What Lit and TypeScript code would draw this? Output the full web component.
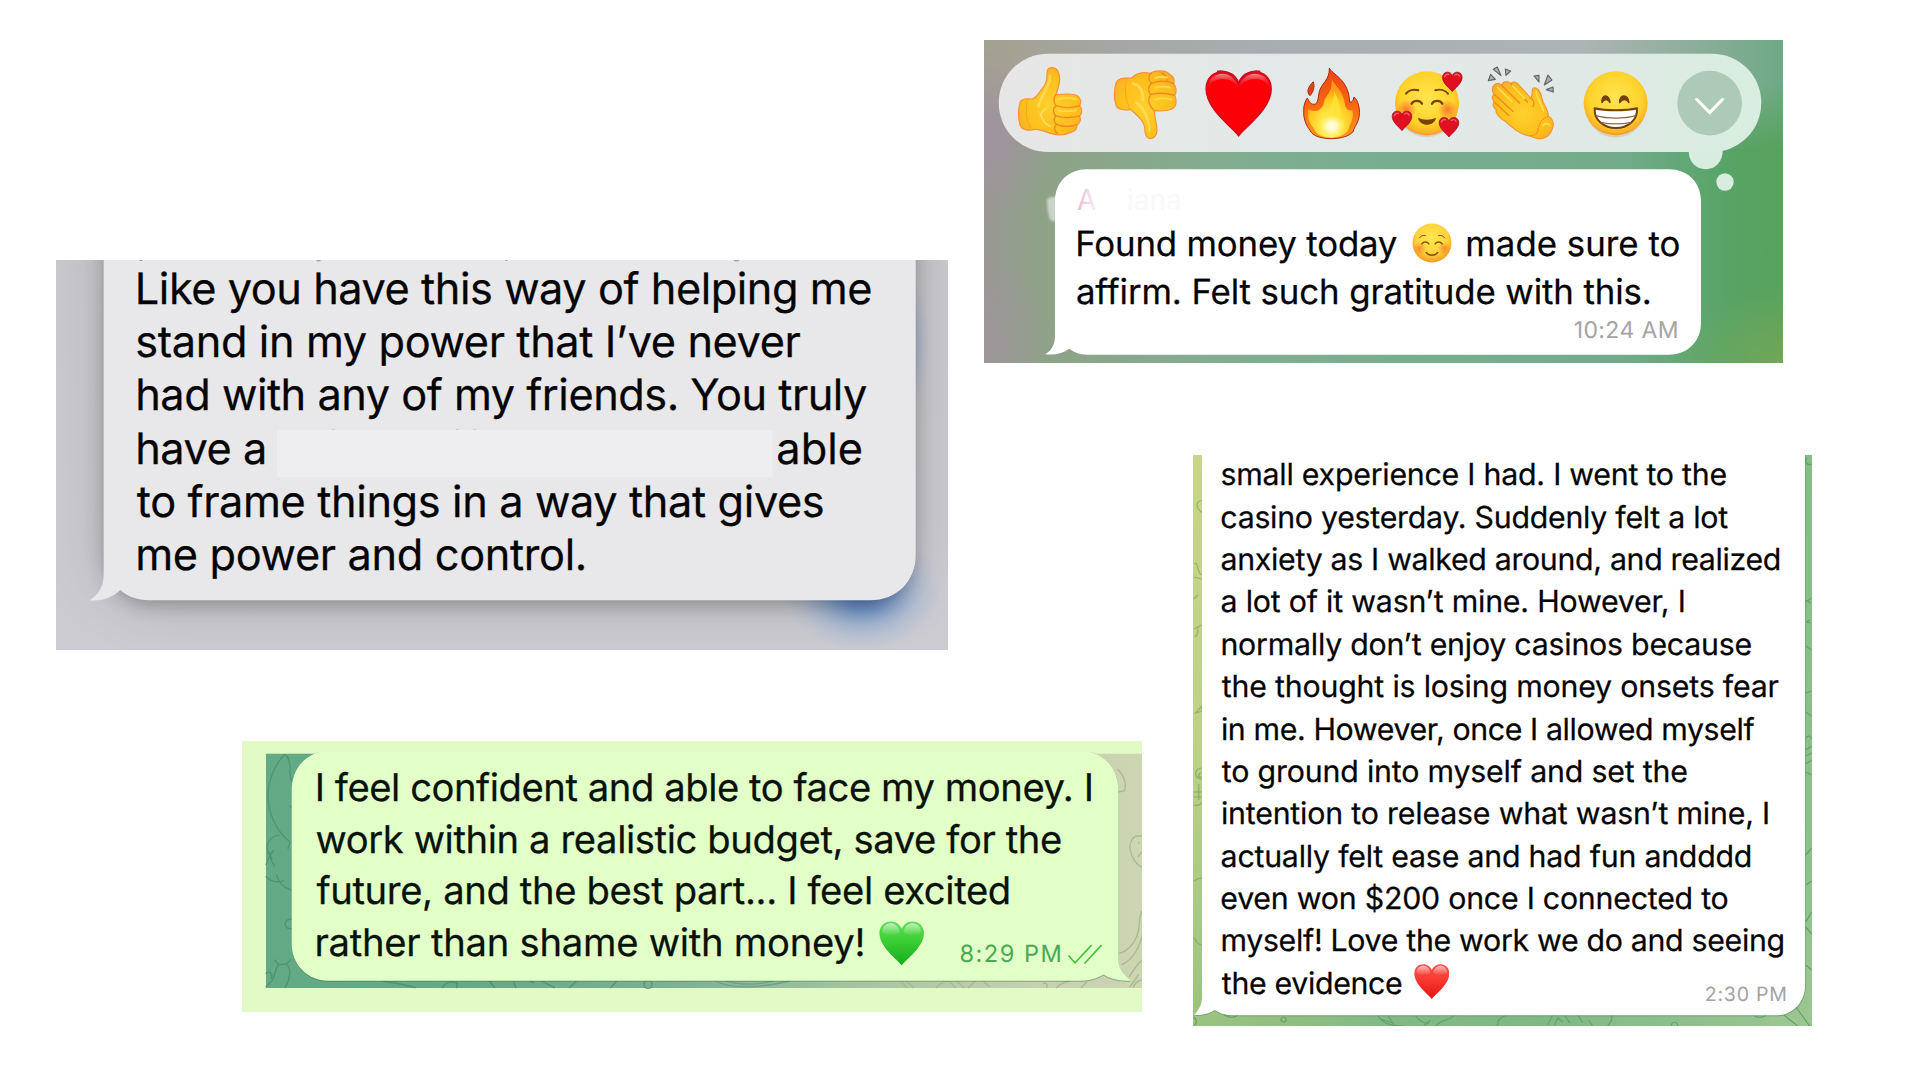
import { LitElement, html, svg, css } from 'lit';
import { customElement, property } from 'lit/decorators.js';
import { styleMap } from 'lit/directives/style-map.js';

const FAMILY = 'Inter, "Liberation Sans", sans-serif';
// half of (ascent - descent) of Inter, in em
const BASELINE_EM = 0.3636;

interface Run {
  text?: string;
  icon?: unknown;
  from: number;
  to: number;
  drop?: number;
  size?: number;
  color?: string;
}

const ctx = document.createElement('canvas').getContext('2d')!;

function inkOf(text: string, size: number) {
  ctx.font = `200px ${FAMILY}`;
  const m = ctx.measureText(text);
  const k = size / 200;
  return {
    left: -m.actualBoundingBoxLeft * k,
    right: m.actualBoundingBoxRight * k,
    width: m.width * k,
  };
}

@customElement('message-text')
export class MessageText extends LitElement {
  @property({ attribute: false }) lines: Run[][] = [];
  @property({ type: Number }) left = 0;
  @property({ type: Number }) size = 30;
  @property({ type: Number }) leading = 40;

  static styles = css`
    :host {
      display: block;
      font-family: Inter, "Liberation Sans", sans-serif;
      text-rendering: geometricPrecision;
      color: var(--message-color, #050505);
    }

    .line {
      display: flex;
      align-items: flex-start;
    }

    .run {
      flex: none;
      white-space: pre;
      -webkit-text-stroke: 0.25px currentColor;
    }

    .small {
      -webkit-text-stroke: 0;
    }

    .icon {
      flex: none;
      line-height: 0;
    }
  `;

  renderLine(runs: Run[]) {
    let cursor = this.left;
    return runs.map((run) => {
      if (run.icon) {
        const style = {
          marginLeft: `${run.from - cursor}px`,
          marginTop: `${run.drop ?? 0}px`,
          width: `${run.to - run.from}px`,
        };
        cursor = run.to;
        return html`<span class="icon" style=${styleMap(style)}>${run.icon}</span>`;
      }
      const text = run.text!;
      const size = run.size ?? this.size;
      const ink = inkOf(text, size);
      const spacing = text.length > 1
        ? (run.to - run.from - (ink.right - ink.left)) / (text.length - 1)
        : 0;
      const start = run.from - ink.left;
      const style = {
        marginLeft: `${start - cursor}px`,
        marginTop: `${(run.drop ?? 0) + BASELINE_EM * (this.size - size)}px`,
        fontSize: `${size}px`,
        letterSpacing: `${spacing}px`,
        color: run.color ?? 'inherit',
      };
      cursor = start + ink.width + spacing * text.length;
      return html`<span class="run ${run.size ? 'small' : ''}" style=${styleMap(style)}>${text}</span>`;
    });
  }

  render() {
    const height = { height: `${this.leading}px`, lineHeight: `${this.leading}px` };
    return this.lines.map(
      (runs) => html`<div class="line" style=${styleMap(height)}>${this.renderLine(runs)}</div>`
    );
  }
}

const HEART = 'M50 98C42 86 1 58 1 27C1 10 13 1 26 1C38 1 46 8 50 17C54 8 62 1 74 1C87 1 99 10 99 27C99 58 58 86 50 98Z';

const heart = (id: string, top: string, mid: string, end: string) => html`
  <svg width="100%" viewBox="0 0 100 99">
    <defs>
      <linearGradient id=${id} x1="0" y1="0" x2="0" y2="1">
        <stop offset="0" stop-color=${top} />
        <stop offset=".4" stop-color=${mid} />
        <stop offset="1" stop-color=${end} />
      </linearGradient>
      <linearGradient id="${id}-shine" x1="0" y1="0" x2="0" y2="1">
        <stop offset="0" stop-color="#fff" stop-opacity=".6" />
        <stop offset="1" stop-color="#fff" stop-opacity="0" />
      </linearGradient>
    </defs>
    <path d=${HEART} fill="url(#${id})" />
    <path d="M7 24C8 10 18 5 27 5C38 6 44 14 46 24C36 34 15 34 7 24ZM54 24C56 14 62 6 73 5C82 5 92 10 93 24C85 34 64 34 54 24Z" fill="url(#${id}-shine)" />
  </svg>`;

const smile = html`
  <svg width="100%" viewBox="96 578 121 121">
    <defs>
      <radialGradient id="sm" cx=".5" cy=".38" r=".62">
        <stop offset="0" stop-color="#ffe94f" />
        <stop offset=".65" stop-color="#fdd33c" />
        <stop offset="1" stop-color="#f29a1f" />
      </radialGradient>
      <radialGradient id="smc"><stop offset="0" stop-color="#f5692c" stop-opacity=".65" /><stop offset="1" stop-color="#f5692c" stop-opacity="0" /></radialGradient>
    </defs>
    <circle cx="156.5" cy="638.5" r="59" fill="url(#sm)" />
    <circle cx="119" cy="655" r="20" fill="url(#smc)" />
    <circle cx="194" cy="655" r="20" fill="url(#smc)" />
    <g fill="none" stroke="#8a4b12" stroke-width="4.5" stroke-linecap="round">
      <path d="M126 641C131 634 142 634 147 641M166 641C171 634 182 634 187 641M139 667C146 678 167 678 174 667" />
      <path d="M118 623C123 616 130 614 137 616M176 616C183 614 190 616 195 623" stroke-width="3" />
    </g>
  </svg>`;

const checks = html`
  <svg width="100%" viewBox="1134 640 102 62">
    <path d="M1137 676L1155 697L1203 645M1185 697L1233 645" fill="none" stroke="#45c43d" stroke-width="5" stroke-linejoin="round" stroke-linecap="round" />
  </svg>`;

// one cell of the reaction bar; all of them share the same vertical range
const cell = (x: number, art: unknown) => html`<svg class="reaction" viewBox="${x} 71 283 295">${art}</svg>`;

const smallHeart = (x: number, y: number) => svg`
  <path transform="translate(${x} ${y}) scale(.6)" d=${HEART} fill="#e00f22" stroke="#a80d20" stroke-width="4" />
  <path transform="translate(${x} ${y}) scale(.6)" d="M12 24C14 12 24 10 32 12M62 15C70 10 80 12 86 20" fill="none" stroke="#f7606a" stroke-width="7" stroke-linecap="round" />`;

const reactions = [
  cell(99, svg`
    <defs>
      <radialGradient id="hand" cx=".5" cy=".55" r=".6"><stop offset="0" stop-color="#ffd02e" /><stop offset=".7" stop-color="#fdbf1b" /><stop offset="1" stop-color="#fbaf28" /></radialGradient>
    </defs>
    <path d="M247 112C260 112 268 124 269 146C269 165 262 180 258 193C285 190 310 190 322 196C335 203 334 218 329 227C338 235 336 251 329 257C334 268 329 280 321 284C322 298 312 304 300 307C285 315 262 315 245 310C230 306 208 294 190 298C175 302 155 299 150 284C144 262 145 235 150 216C155 204 170 205 185 206C200 203 206 189 215 177C229 162 232 142 231 128C231 117 237 112 247 112Z" fill="url(#hand)" stroke="#f79331" stroke-width="3.5" />
    <g fill="none" stroke="#f08a1e" stroke-width="4" stroke-linecap="round">
      <path d="M258 193C250 201 250 216 258 226C247 236 249 249 257 257C249 268 252 276 259 282C251 292 254 302 262 309" />
      <path d="M258 226C280 233 308 233 329 226M257 257C280 264 308 263 329 257M259 282C280 290 303 290 321 283" />
      <path d="M173 207C165 234 167 268 181 292" stroke="#fba421" stroke-width="3" />
      <path d="M240 138C241 168 215 190 205 228" stroke="#ffe270" stroke-width="8" opacity=".6" />
      <path d="M264 207C280 202 304 202 318 207M266 240C280 243 304 243 318 240" stroke="#ffdb51" stroke-width="5" />
      <path d="M213 255C217 271 229 283 241 288M228 234C218 244 213 247 211 254" stroke="#ffe270" stroke-width="5" opacity=".8" />
    </g>`),
  cell(382, svg`
    <path d="M541 325C528 323 525 306 525 290C520 265 495 250 483 237C465 240 445 240 439 225C432 205 433 175 440 155C450 138 470 145 485 143C500 130 520 124 541 129C560 118 590 120 600 132C612 138 616 150 612 160C621 172 621 185 615 195C623 210 621 231 605 237C590 242 570 243 555 241C553 262 562 280 562 298C562 315 553 326 541 325Z" fill="url(#hand)" stroke="#f79331" stroke-width="3.5" />
    <g fill="none" stroke="#f08a1e" stroke-width="4" stroke-linecap="round">
      <path d="M546 128C534 137 536 151 545 159C534 170 535 184 543 193C533 207 536 224 553 240" />
      <path d="M545 159C563 151 592 150 612 160M543 193C564 187 590 188 615 195M575 128C585 130 592 140 592 150" />
      <path d="M471 145C464 172 466 210 482 237" stroke="#fba421" stroke-width="3" />
      <path d="M490 160C508 164 521 179 520 209M500 218C519 230 534 250 540 300" stroke="#ffe270" stroke-width="8" opacity=".6" />
      <path d="M558 172C573 168 590 168 602 172M556 208C570 204 592 204 605 208M557 143C568 139 582 139 592 142" stroke="#ffdb51" stroke-width="5" />
    </g>`),
  cell(665, svg`
    <defs><linearGradient id="rim" x1="0" y1="0" x2="0" y2="1"><stop offset="0" stop-color="#ef8b90" /><stop offset="1" stop-color="#f00" stop-opacity="0" /></linearGradient></defs>
    <path transform="translate(705 122) scale(2 1.99)" d=${HEART} fill="#fb0007" stroke="#cc0824" stroke-width="1.8" />
    <path d="M714 174C713 142 735 131 758 130C779 131 793 144 804 165C816 144 832 131 853 130C877 131 897 143 896 174C892 155 876 146 855 146C832 146 816 155 805 178C794 155 780 146 757 146C735 147 721 156 714 174Z" fill="url(#rim)" />
    <path d="M740 124C766 118 794 134 805 160C816 134 844 118 870 124" fill="none" stroke="#c7102e" stroke-width="6" />`),
  cell(948, svg`
    <defs>
      <linearGradient id="fl" x1="0" y1="0" x2="0" y2="1"><stop offset="0" stop-color="#e94413" /><stop offset=".55" stop-color="#f96a10" /><stop offset="1" stop-color="#fa9b18" /></linearGradient>
      <radialGradient id="fi" cx=".5" cy=".82" r=".65"><stop offset="0" stop-color="#fffbd0" /><stop offset=".3" stop-color="#ffec4d" /><stop offset=".75" stop-color="#ffc51d" /><stop offset="1" stop-color="#ff9b12" /></radialGradient>
      <radialGradient id="fc"><stop offset="0" stop-color="#fffdec" /><stop offset=".4" stop-color="#fffbd0" stop-opacity=".9" /><stop offset="1" stop-color="#fff27a" stop-opacity="0" /></radialGradient>
    </defs>
    <path d="M1078 113C1085 132 1137 145 1139 216C1148 216 1150 208 1152 200C1165 210 1170 235 1168 255C1165 280 1152 290 1150 303C1140 318 1110 325 1085 325C1055 325 1028 318 1020 300C1008 285 1000 265 1001 240C1001 222 1007 210 1012 203C1018 215 1022 222 1032 222C1045 222 1044 200 1048 185C1052 160 1080 150 1078 113Z" fill="url(#fl)" stroke="#ad2418" stroke-width="3" />
    <path d="M1085 146C1093 166 1121 178 1126 228C1132 242 1140 241 1147 240C1154 268 1138 281 1136 297C1127 315 1104 322 1084 322C1062 322 1040 315 1032 296C1021 281 1009 262 1015 237C1030 247 1054 243 1061 220C1065 195 1090 184 1085 146Z" fill="url(#fi)" />
    <path d="M1091 182C1099 205 1079 218 1079 246C1065 252 1062 264 1059 281C1053 278 1050 274 1048 268C1044 290 1053 313 1085 317C1118 313 1127 289 1121 267C1118 274 1114 277 1109 278C1117 242 1106 205 1091 182Z" fill="#ffe53a" opacity=".75" />
    <ellipse cx="1085" cy="288" rx="40" ry="36" fill="url(#fc)" />
    <path d="M1030 154C1035 170 1030 185 1020 196C1009 186 1013 170 1030 154Z" fill="#e24319" stroke="#ad2418" stroke-width="3" />`),
  cell(1, svg`
    <defs>
      <radialGradient id="face" cx=".5" cy=".42" r=".58"><stop offset="0" stop-color="#ffe552" /><stop offset=".72" stop-color="#fed22a" /><stop offset=".93" stop-color="#fdb223" /><stop offset="1" stop-color="#f68b35" /></radialGradient>
      <radialGradient id="cheek"><stop offset="0" stop-color="#f8642d" stop-opacity=".8" /><stop offset="1" stop-color="#f8642d" stop-opacity="0" /></radialGradient>
    </defs>
    <ellipse cx="142" cy="224" rx="94" ry="97" fill="#b9a37c" opacity=".35" />
    <circle cx="142" cy="219" r="96" fill="url(#face)" />
    <circle cx="80" cy="238" r="30" fill="url(#cheek)" />
    <circle cx="204" cy="238" r="30" fill="url(#cheek)" />
    <g fill="none" stroke="#7a430c" stroke-width="7" stroke-linecap="round">
      <path d="M96 220C103 209 121 209 127 220M157 220C164 209 182 209 188 220" />
      <path d="M79 190C86 179 102 176 116 180M167 180C181 176 197 179 205 190" stroke-width="6" />
    </g>
    <path d="M115 262C130 270 153 270 169 262C164 290 120 290 115 262Z" fill="#7a430c" />
    ${smallHeart(188, 125)}${smallHeart(37, 242)}${smallHeart(178, 261)}`),
  cell(284, svg`
    <g fill="#a9afb0" stroke="#606668" stroke-width="3.5" stroke-linejoin="round">
      <path d="M327 151L334 132L348 147ZM342 117L354 110L365 136ZM378 116L394 122L380 135ZM464 137L479 135L479 155ZM506 134L518 149L495 164ZM501 178L521 170L522 185Z" />
    </g>
    <path d="M345 165C350 156 362 158 368 166C368 154 386 150 394 160C399 153 410 154 417 162L455 204C462 190 455 176 463 173C476 171 484 185 488 205C492 225 509 240 507 258C519 262 524 278 521 290C516 312 500 326 484 325C470 328 463 318 450 317C425 313 397 291 378 273C362 265 346 247 351 239C342 231 338 221 345 215C338 207 338 198 344 192C337 183 337 170 345 165Z" fill="url(#hand)" stroke="#f79331" stroke-width="3.5" />
    <g fill="none" stroke="#ed8d18" stroke-width="4" stroke-linecap="round">
      <path d="M368 166L421 219M394 160L444 215M344 192L401 243M345 215L389 256M455 204C466 212 466 220 461 229" />
      <path d="M507 258C491 263 478 277 476 300C474 311 465 317 451 316" stroke-width="3" />
      <path d="M355 172L397 213M400 167L435 204M470 183C473 203 487 222 492 241" stroke="#ffe04d" stroke-width="5" />
      <path d="M491 285C499 278 508 279 511 284" stroke="#ffe04d" stroke-width="5" />
    </g>`),
  cell(567, svg`
    <ellipse cx="707" cy="225" rx="93" ry="97" fill="#b9a37c" opacity=".35" />
    <circle cx="707" cy="219" r="96" fill="url(#face)" />
    <path d="M666 217C663 190 689 190 690 217C683 205 673 205 666 217ZM719 217C717 190 744 190 747 217C739 205 728 205 719 217Z" fill="#74400c" stroke="#74400c" stroke-width="4" stroke-linejoin="round" />
    <path d="M644 234C675 242 739 242 771 234C774 270 742 293 708 293C674 293 641 270 644 234Z" fill="#fff" stroke="#74400c" stroke-width="6" stroke-linejoin="round" />
    <path d="M648 256C680 266 736 266 767 256M662 276C690 282 725 282 754 276" fill="none" stroke="#8d684c" stroke-width="4" />`),
  cell(850, svg`
    <circle cx="990" cy="218.5" r="97" fill="#accab7" />
    <path d="M951 207L990 247L1029 207" fill="none" stroke="#fff" stroke-width="9" stroke-linecap="round" stroke-linejoin="round" />`),
];

const helpingLines: Run[][] = [
  [{ text: 'Like you have this way of helping me', from: 138.5, to: 870.5 }],
  [{ text: 'stand in my power that I’ve never', from: 137.5, to: 800 }],
  [{ text: 'had with any of my friends. You truly', from: 138.5, to: 866.5 }],
  [{ text: 'have a', from: 138.5, to: 264 }, { text: 'able', from: 778, to: 861 }],
  [{ text: 'to frame things in a way that gives', from: 137, to: 822.7 }],
  [{ text: 'me power and control.', from: 138.5, to: 584 }],
];

const foundLines: Run[][] = [
  [
    { text: 'Found money today', from: 1078.3, to: 1396.7 },
    { icon: smile, from: 1412.2, to: 1452.2, drop: 3.5 },
    { text: 'made sure to', from: 1468, to: 1678.7 },
  ],
  [{ text: 'affirm. Felt such gratitude with this.', from: 1077.3, to: 1649.2 }],
  [{ text: '10:24 AM', from: 1574.7, to: 1676.7, size: 23, drop: -14.6, color: '#a4a4a6' }],
];

const budgetLines: Run[][] = [
  [{ text: 'I feel confident and able to face my money. I', from: 318, to: 1091 }],
  [{ text: 'work within a realistic budget, save for the', from: 316.7, to: 1060.7 }],
  [{ text: 'future, and the best part... I feel excited', from: 316.7, to: 1008.7 }],
  [
    { text: 'rather than shame with money!', from: 317.3, to: 862.7 },
    { icon: heart('green', '#63de5c', '#3fd036', '#14ab1e'), from: 879.3, to: 924.7, drop: 3.3 },
    { text: '8:29 PM', from: 961, to: 1060, size: 23.6, drop: 5.4, color: '#4ca955' },
    { icon: checks, from: 1068, to: 1102, drop: 26 },
  ],
];

const casinoLines: Run[][] = [
  [{ text: 'small experience I had. I went to the', from: 1222, to: 1725.7 }],
  [{ text: 'casino yesterday. Suddenly felt a lot', from: 1221.8, to: 1727.7 }],
  [{ text: 'anxiety as I walked around, and realized', from: 1221.8, to: 1779.3 }],
  [{ text: 'a lot of it wasn’t mine. However, I', from: 1221.8, to: 1683.3 }],
  [{ text: 'normally don’t enjoy casinos because', from: 1222.7, to: 1750.7 }],
  [{ text: 'the thought is losing money onsets fear', from: 1222, to: 1778.3 }],
  [{ text: 'in me. However, once I allowed myself', from: 1222.7, to: 1754.3 }],
  [{ text: 'to ground into myself and set the', from: 1222, to: 1686.5 }],
  [{ text: 'intention to release what wasn’t mine, I', from: 1222.7, to: 1767.7 }],
  [{ text: 'actually felt ease and had fun andddd', from: 1221.8, to: 1750.3 }],
  [{ text: 'even won $200 once I connected to', from: 1221.8, to: 1727.3 }],
  [{ text: 'myself! Love the work we do and seeing', from: 1222.7, to: 1783 }],
  [
    { text: 'the evidence', from: 1222, to: 1401.3 },
    { icon: heart('red', '#f5564f', '#fb3b35', '#e3150f'), from: 1413.8, to: 1449.5, drop: 1 },
    { text: '2:30 PM', from: 1706.3, to: 1785.3, size: 19.6, drop: 6.2, color: '#a3a3a5' },
  ],
];

@customElement('app-root')
export class AppRoot extends LitElement {
  static styles = css`
    :host {
      display: flex;
      align-items: flex-start;
      width: 1920px;
      height: 1080px;
      overflow: hidden;
      background: #fff;
    }

    .column {
      display: flex;
      flex-direction: column;
      align-items: flex-start;
      flex: none;
    }

    .left {
      width: 984px;
      padding-top: 260px;
      gap: 91px;
    }

    .right {
      padding-top: 40px;
      gap: 92.3px;
    }

    .clip {
      position: relative;
      flex: none;
      box-sizing: border-box;
      overflow: hidden;
    }

    .backdrop {
      position: absolute;
      inset: 0;
      width: 100%;
      height: 100%;
    }

    message-text {
      position: relative;
    }

    .helping {
      width: 892px;
      height: 390px;
      margin-left: 56px;
      padding-top: 2.8px;
    }

    .found {
      width: 799px;
      height: 322.7px;
      padding-top: 13.7px;
    }

    .budget {
      width: 900px;
      height: 271px;
      margin-left: 242px;
      padding-top: 22.2px;
      --message-color: #08120a;
    }

    .casino {
      width: 618.7px;
      height: 571px;
      margin-left: 209.3px;
    }

    .casino message-text {
      margin-top: -0.8px;
    }

    .bar {
      position: relative;
      display: grid;
      grid-template-columns: repeat(8, 94.3px);
      width: 762.6px;
      height: 98.3px;
      box-sizing: border-box;
      margin-left: 14.7px;
      margin-bottom: 67.6px;
      padding-left: 4.3px;
      border-radius: 50px;
    }

    .reaction {
      width: 94.3px;
      height: 98.3px;
    }

    .ghost {
      font-family: Inter, "Liberation Sans", sans-serif;
      font-size: 28px;
    }
  `;

  renderHelping() {
    return html`
      <section class="clip helping">
        <svg class="backdrop" viewBox="56 260 892 390">
          <defs>
            <linearGradient id="h-bg" x1="0" y1="0" x2="0" y2="1">
              <stop offset="0" stop-color="#c9c8cc" />
              <stop offset="1" stop-color="#cccbd1" />
            </linearGradient>
            <radialGradient id="h-blue">
              <stop offset="0" stop-color="#4a74bb" />
              <stop offset=".35" stop-color="#668fcb" stop-opacity=".8" />
              <stop offset=".7" stop-color="#8dabd5" stop-opacity=".35" />
              <stop offset="1" stop-color="#a7bcdb" stop-opacity="0" />
            </radialGradient>
            <filter id="h-near" x="-20%" y="-20%" width="140%" height="140%"><feGaussianBlur stdDeviation="10" /></filter>
            <filter id="h-far" x="-20%" y="-20%" width="140%" height="140%"><feGaussianBlur stdDeviation="30" /></filter>
          </defs>
          <rect x="56" y="260" width="892" height="390" fill="url(#h-bg)" />
          <ellipse cx="862" cy="590" rx="80" ry="62" fill="url(#h-blue)" />
          <ellipse cx="902" cy="345" rx="30" ry="75" fill="url(#h-blue)" opacity=".4" />
          <rect x="104" y="180" width="812" height="424" rx="46" opacity=".13" filter="url(#h-far)" />
          <rect x="106" y="180" width="808" height="424" rx="46" opacity=".28" filter="url(#h-near)" />
          <path d="M103.7 250V574C103.7 588 97 596 89.5 600.3C103 601.5 113 597 120.3 590C127 596 137 600.3 149 600.3H870C897 600.3 915.7 581 915.7 555V250Z" fill="#e8e8ea" />
          <g fill="#a9a9ab">
            <path d="M139 260h4l-1 1h-2zM316 260h5l-1 1.5h-3zM505 260h3l-1 1h-2zM733 260h7l-2 1.5h-3z" />
          </g>
          <rect x="277" y="430" width="495.7" height="47" fill="#eeeef0" />
          <path d="M332 429h3v1h-3zM456 429h3v1h-3zM473 429h3v1h-3z" fill="#cfcfd1" />
        </svg>
        <message-text .lines=${helpingLines} .left=${56} .size=${43.3} .leading=${53.25}></message-text>
      </section>`;
  }

  renderFound() {
    return html`
      <section class="clip found">
        <svg class="backdrop" viewBox="984 40 799 322.7">
          <defs>
            <linearGradient id="f-bg" x1="0" y1="0" x2="1" y2="0">
              <stop offset="0" stop-color="#9a9794" />
              <stop offset=".07" stop-color="#8fa288" />
              <stop offset=".3" stop-color="#82ad91" />
              <stop offset=".5" stop-color="#78ae90" />
              <stop offset=".8" stop-color="#72ab8a" />
              <stop offset=".93" stop-color="#57a467" />
              <stop offset="1" stop-color="#57a25a" />
            </linearGradient>
            <linearGradient id="f-top" x1="0" y1="0" x2="1" y2="0">
              <stop offset="0" stop-color="#a3a18f" />
              <stop offset=".15" stop-color="#a5a6a3" />
              <stop offset=".35" stop-color="#a7aeb1" />
              <stop offset=".75" stop-color="#adb4b5" />
              <stop offset=".88" stop-color="#8fae9c" />
              <stop offset="1" stop-color="#6ea985" />
            </linearGradient>
            <linearGradient id="f-fade" x1="0" y1="0" x2="0" y2="1">
              <stop offset="0" stop-color="#fff" />
              <stop offset=".4" stop-color="#fff" />
              <stop offset="1" stop-color="#000" />
            </linearGradient>
            <mask id="f-mask"><rect x="984" y="40" width="799" height="110" fill="url(#f-fade)" /></mask>
            <radialGradient id="f-purple"><stop offset="0" stop-color="#a093a0" /><stop offset="1" stop-color="#a093a0" stop-opacity="0" /></radialGradient>
            <radialGradient id="f-olive"><stop offset="0" stop-color="#73a758" /><stop offset="1" stop-color="#73a758" stop-opacity="0" /></radialGradient>
            <linearGradient id="f-pill" x1="0" y1="0" x2="1" y2="0">
              <stop offset="0" stop-color="#e7e6e6" />
              <stop offset=".35" stop-color="#e3e9e8" />
              <stop offset=".75" stop-color="#e1e9e6" />
              <stop offset="1" stop-color="#d8ede0" />
            </linearGradient>
            <linearGradient id="f-name" x1="0" y1="0" x2="1" y2="0"><stop offset="0" stop-color="#e3b9d0" /><stop offset="1" stop-color="#f8eff3" /></linearGradient>
            <filter id="f-soft"><feGaussianBlur stdDeviation="1.2" /></filter>
          </defs>
          <rect x="984" y="40" width="799" height="323" fill="url(#f-bg)" />
          <rect x="984" y="40" width="799" height="110" fill="url(#f-top)" mask="url(#f-mask)" />
          <ellipse cx="986" cy="135" rx="70" ry="85" fill="url(#f-purple)" />
          <ellipse cx="984" cy="345" rx="70" ry="90" fill="url(#f-purple)" opacity=".6" />
          <ellipse cx="1790" cy="365" rx="120" ry="80" fill="url(#f-olive)" />
          <path d="M1047 199Q1051 196 1058 197V223L1050 220Q1047 211 1047 199Z" fill="#dce5da" opacity=".75" filter="url(#f-soft)" />
          <rect x="998.7" y="53.7" width="762.6" height="98.3" rx="49.15" fill="url(#f-pill)" />
          <path d="M1688.7 151C1688.7 162 1696 169.2 1705.7 169.2S1722.8 162 1722.8 150L1700 146Z" fill="#d9ece0" />
          <circle cx="1725" cy="182" r="8.7" fill="#d9ece0" />
          <path d="M1087 169.3H1669C1688 169.3 1701 183 1701 201V323C1701 341 1688 354.7 1669 354.7H1087C1080 354.7 1074 352.5 1069.3 348.7C1063 353 1055 355.5 1045.3 354.2C1051 351 1055 345 1055 336V201C1055 183 1068 169.3 1087 169.3Z" fill="#fff" />
          <text class="ghost" x="1077" y="210" fill="url(#f-name)">A</text>
          <text class="ghost" x="1127" y="210" fill="#fbf8f9">iana</text>
        </svg>
        <div class="bar">${reactions}</div>
        <message-text .lines=${foundLines} .left=${984} .size=${34.8} .leading=${48.3}></message-text>
      </section>`;
  }

  renderBudget() {
    return html`
      <section class="clip budget">
        <svg class="backdrop" viewBox="242 741 900 271">
          <defs>
            <linearGradient id="b-bg" x1="0" y1="0" x2="1" y2="0">
              <stop offset="0" stop-color="#62aa86" />
              <stop offset=".25" stop-color="#66aa87" />
              <stop offset=".48" stop-color="#7eb294" />
              <stop offset=".7" stop-color="#abc5a5" />
              <stop offset=".88" stop-color="#c6d1b0" />
              <stop offset="1" stop-color="#cdd5b1" />
            </linearGradient>
          </defs>
          <rect x="242" y="741" width="900" height="271" fill="#e2fac6" />
          <rect x="266" y="753.7" width="876" height="234.3" fill="url(#b-bg)" />
          <g transform="translate(230 730) scale(.33333)" fill="none" stroke="#4b8f6d" stroke-width="4" stroke-linecap="round" opacity=".8">
            <path d="M163 74C130 110 112 160 114 205C117 255 140 305 180 336M163 74C180 80 182 115 179 125C180 140 184 150 186 155M180 228L184 232M180 336L174 356" />
            <path d="M148 316C125 316 108 338 112 360C114 372 120 376 126 386M130 362C118 378 112 390 108 404M118 366C120 385 126 398 134 408M108 440C125 456 142 460 162 452M140 436C146 458 162 474 184 480" />
            <path d="M184 567C170 567 164 576 166 584C168 593 176 597 184 596M134 690L146 704L168 702L182 690M146 704C132 720 138 735 126 752C118 762 112 766 108 770M168 702C184 712 182 745 166 772M108 730C120 722 130 732 124 746" />
            <path d="M455 753C500 760 530 764 556 773M638 773C645 756 664 752 682 760L680 773M778 753L794 773M850 753L858 773M900 753L910 758M935 753L973 773M1018 773L1040 753M1142 773L1160 753" />
            <circle cx="1254" cy="763" r="12" />
          </g>
          <g transform="translate(690 730) scale(.33333)" fill="none" stroke="#a9b996" stroke-width="4" stroke-linecap="round">
            <path d="M75 753C120 775 190 778 300 753M110 753C150 765 200 765 250 753" stroke="#6ea386" />
            <path d="M634 756L650 773M650 753L670 773M740 773C752 757 765 753 778 753L796 773M800 753L822 773M835 773L856 753M880 753L898 770M1060 760C1068 757 1074 764 1070 773M1100 773C1110 760 1124 756 1140 753M1174 773L1190 756" />
            <path d="M1282 118C1302 135 1310 160 1304 182L1286 186M1354 318C1330 314 1318 332 1320 356C1324 385 1340 405 1356 412M1346 337v2M1344 380L1356 366M1354 545C1345 570 1352 590 1340 620C1330 645 1310 665 1288 670M1356 620C1345 660 1325 690 1296 704M1356 690C1340 705 1330 720 1318 740M1330 772C1334 760 1345 752 1356 750M1320 770L1345 735" />
          </g>
          <path d="M291.7 790C291.7 772 302 757 319 752H1091C1108 757 1118.3 772 1118.3 790V960C1118.3 970 1124 977 1131 981.4C1121 982.5 1111 980.5 1103.3 975.6C1097 979.5 1090 981.7 1081 981.7H328C307 981.7 291.7 965 291.7 945Z" fill="#3f6b4b" opacity=".45" />
          <path d="M291.7 790C291.7 772 302 757 319 752H1091C1108 757 1118.3 772 1118.3 790V959C1118.3 969 1124 976 1131 980.4C1121 981.5 1111 979.5 1103.3 974.6C1097 978.5 1090 980.7 1081 980.7H328C307 980.7 291.7 964 291.7 944Z" fill="#e1ffc6" />
        </svg>
        <message-text .lines=${budgetLines} .left=${242} .size=${38.2} .leading=${51.5}></message-text>
      </section>`;
  }

  renderCasino() {
    return html`
      <section class="clip casino">
        <svg class="backdrop" viewBox="1193.3 455 618.7 571">
          <defs>
            <linearGradient id="c-left" x1="0" y1="0" x2="0" y2="1">
              <stop offset="0" stop-color="#c8d584" />
              <stop offset=".5" stop-color="#bed283" />
              <stop offset="1" stop-color="#9bc47f" />
            </linearGradient>
            <linearGradient id="c-base" x1="0" y1="0" x2="1" y2="0">
              <stop offset="0" stop-color="#9cc480" />
              <stop offset=".3" stop-color="#83b984" />
              <stop offset=".55" stop-color="#7fb785" />
              <stop offset="1" stop-color="#9bc691" />
            </linearGradient>
            <linearGradient id="c-right" x1="0" y1="0" x2="0" y2="1">
              <stop offset="0" stop-color="#84be82" />
              <stop offset=".7" stop-color="#8bc288" />
              <stop offset="1" stop-color="#9bc691" />
            </linearGradient>
          </defs>
          <rect x="1193" y="1000" width="620" height="27" fill="url(#c-base)" />
          <rect x="1193" y="455" width="40" height="560" fill="url(#c-left)" />
          <rect x="1770" y="455" width="43" height="571" fill="url(#c-right)" />
          <g fill="none" stroke="#98b65e" stroke-width="1.2">
            <path d="M1203 500C1196 501 1195 508 1203 513M1194 564C1199 560 1197 573 1202 575M1194 577L1202 579M1194 599L1198 595M1194 629L1202 625M1195 637C1200 634 1197 629 1199 626M1196 713L1202 706V711Z" />
            <path d="M1202 768C1194 769 1194 778 1202 779M1202 773C1198 773 1198 777 1202 777M1194 792H1202M1194 797H1202M1199 784V800M1194 805C1199 806 1202 804 1202 802M1194 881C1197 879 1200 878 1202 878M1194 937C1197 943 1200 945 1202 945" stroke="#88ae63" />
          </g>
          <g fill="none" stroke="#64a367" stroke-width="1.2">
            <path d="M1807 458C1804 462 1808 466 1812 464M1806 602L1812 598M1806 600L1811 603M1810 620L1807 622L1811 623M1806 646L1812 650M1806 693L1812 691M1806 712L1812 716M1806 738C1809 735 1811 736 1812 739M1806 750L1812 746M1806 756L1812 753M1806 764L1812 760M1806 772L1812 775M1806 855L1812 848M1806 885L1812 881M1806 922L1812 912M1806 927L1812 934M1806 965L1812 970M1784 1015L1798 1026M1794 1004L1810 1026M1753 1015Q1761 1020 1768 1014" />
            <circle cx="1284" cy="1019.5" r="2.5" />
            <path d="M1378 1015C1383 1024 1392 1026 1404 1026M1381 1019L1393 1023L1388 1015M1416 1016C1420 1021 1425 1024 1429 1023M1436 1026C1443 1018 1451 1021 1455 1015M1424 1026L1431 1020M1498 1026C1497 1021 1501 1017 1508 1015M1194 1017C1198 1020 1197 1024 1194 1026M1224 1015Q1234 1020 1239 1014M1548 1025L1553 1015M1555 1025L1558 1018L1563 1022M1565 1015L1570 1023M1578 1015L1583 1023M1589 1020L1593 1026M1612 1015V1020L1608 1026M1672 1026C1671 1021 1678 1021 1678 1026" />
          </g>
          <path d="M1202.3 450V998C1202.3 1006 1199 1011 1194.5 1015.5C1203 1016.5 1210 1014.5 1215 1011C1220 1014.5 1226 1016.3 1234 1016.3H1777C1794 1016.3 1806 1003 1806 987V450Z" fill="#4f7f52" opacity=".45" />
          <path d="M1202.3 450V997C1202.3 1005 1199 1010 1194.5 1014.7C1203 1015.5 1210 1013.7 1215 1010C1220 1013.5 1226 1015.3 1234 1015.3H1777C1793 1015.3 1805.3 1002 1805.3 986V450Z" fill="#fff" />
        </svg>
        <message-text .lines=${casinoLines} .left=${1193.3} .size=${30.3} .leading=${42.4}></message-text>
      </section>`;
  }

  render() {
    return html`
      <div class="column left">${this.renderHelping()}${this.renderBudget()}</div>
      <div class="column right">${this.renderFound()}${this.renderCasino()}</div>
    `;
  }
}
